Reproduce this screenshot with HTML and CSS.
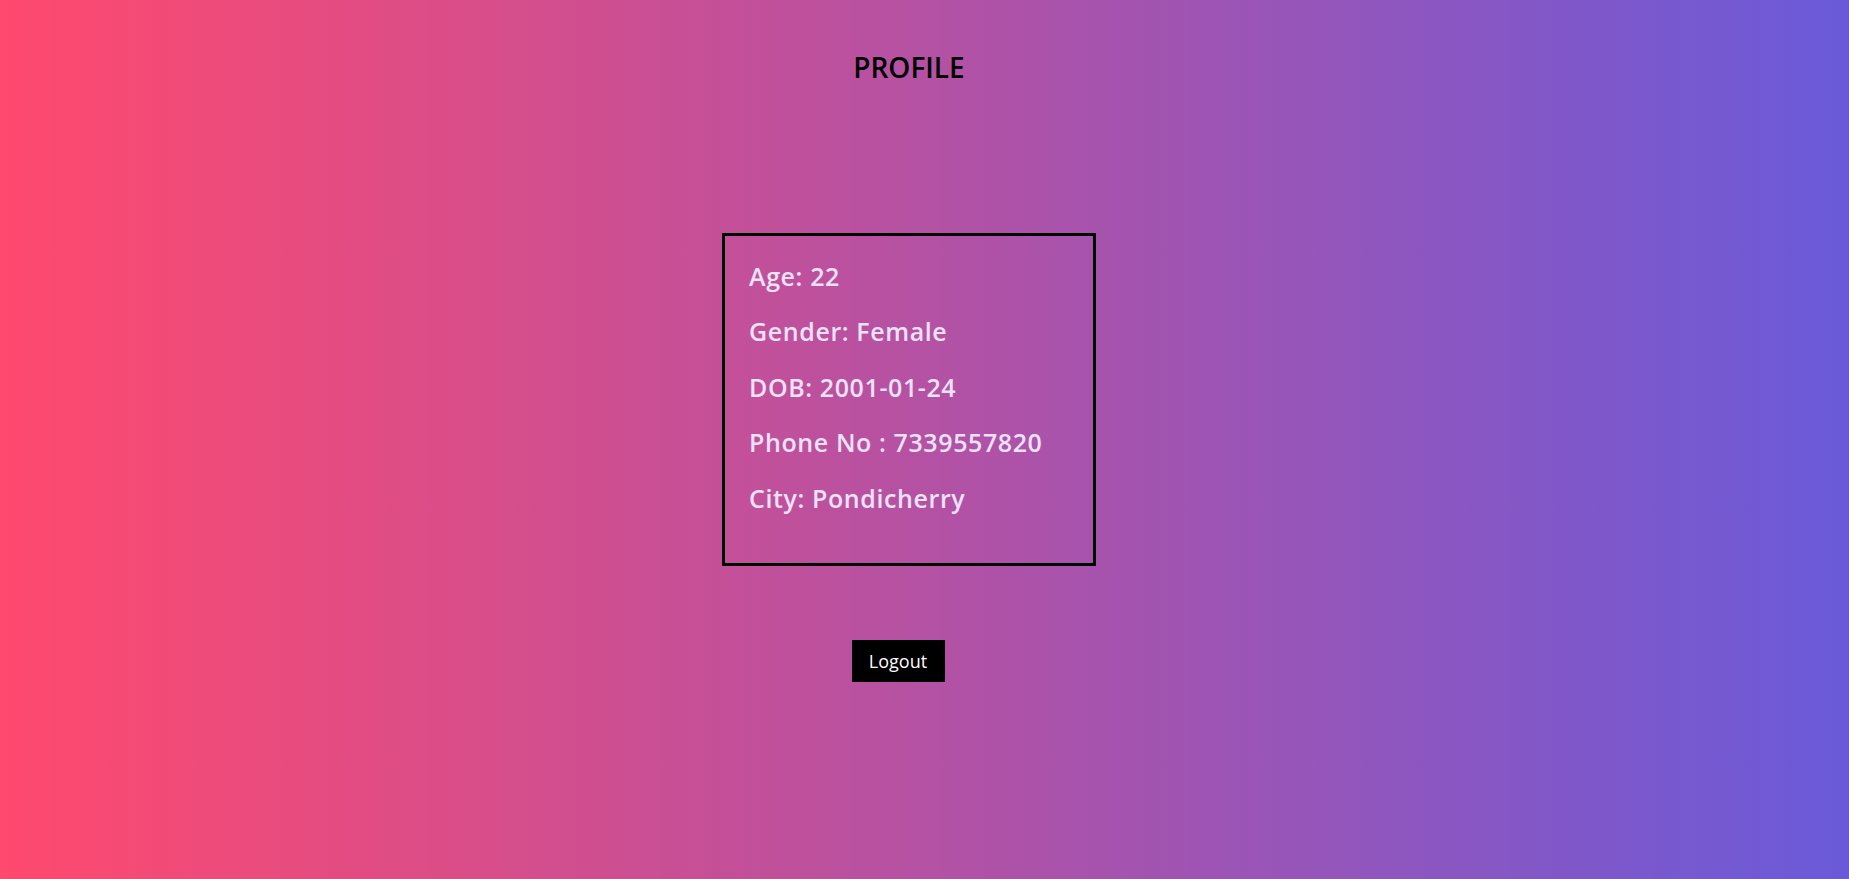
FILE: index.html
```html
<!DOCTYPE html>
<html lang="en">
<head>
<meta charset="utf-8">
<title>Profile</title>
<link rel="stylesheet" href="styles.css">
</head>
<body>
<main class="page">
  <h1 class="title">PROFILE</h1>
  <section class="card">
    <p class="row">Age: 22</p>
    <p class="row">Gender: Female</p>
    <p class="row">DOB: 2001-01-24</p>
    <p class="row">Phone No : 7339557820</p>
    <p class="row">City: Pondicherry</p>
  </section>
  <button class="logout" type="button">Logout</button>
</main>
</body>
</html>
```
FILE: styles.css
```css
html, body {
  margin: 0;
  padding: 0;
}
body {
  min-height: 100vh;
  background: linear-gradient(to right, #ff496e, #6a5ad9);
  font-family: "Open Sans", "Noto Sans", sans-serif;
}
.page {
  display: flex;
  flex-direction: column;
  align-items: center;
  padding-right: 31px;
  min-height: 100vh;
  box-sizing: border-box;
}
.title {
  margin: 53px 0 0 0;
  font-size: 28px;
  line-height: 28px;
  font-weight: 600;
  color: #000;
}
.card {
  margin-top: 152px;
  width: 374px;
  height: 333px;
  box-sizing: border-box;
  border: 3px solid #000;
  padding: 0 24px;
  display: flow-root;
}
.row {
  margin: 23.6px 0;
  font-size: 25px;
  line-height: 32px;
  letter-spacing: 0.6px;
  font-weight: 600;
  color: #ebe2f7;
}
.logout {
  margin-top: 74px;
  margin-right: 22px;
  width: 93px;
  height: 42px;
  border: none;
  background: #000;
  color: #fff;
  font-family: "Open Sans", "Noto Sans", sans-serif;
  font-size: 18px;
  padding: 0;
}
```
